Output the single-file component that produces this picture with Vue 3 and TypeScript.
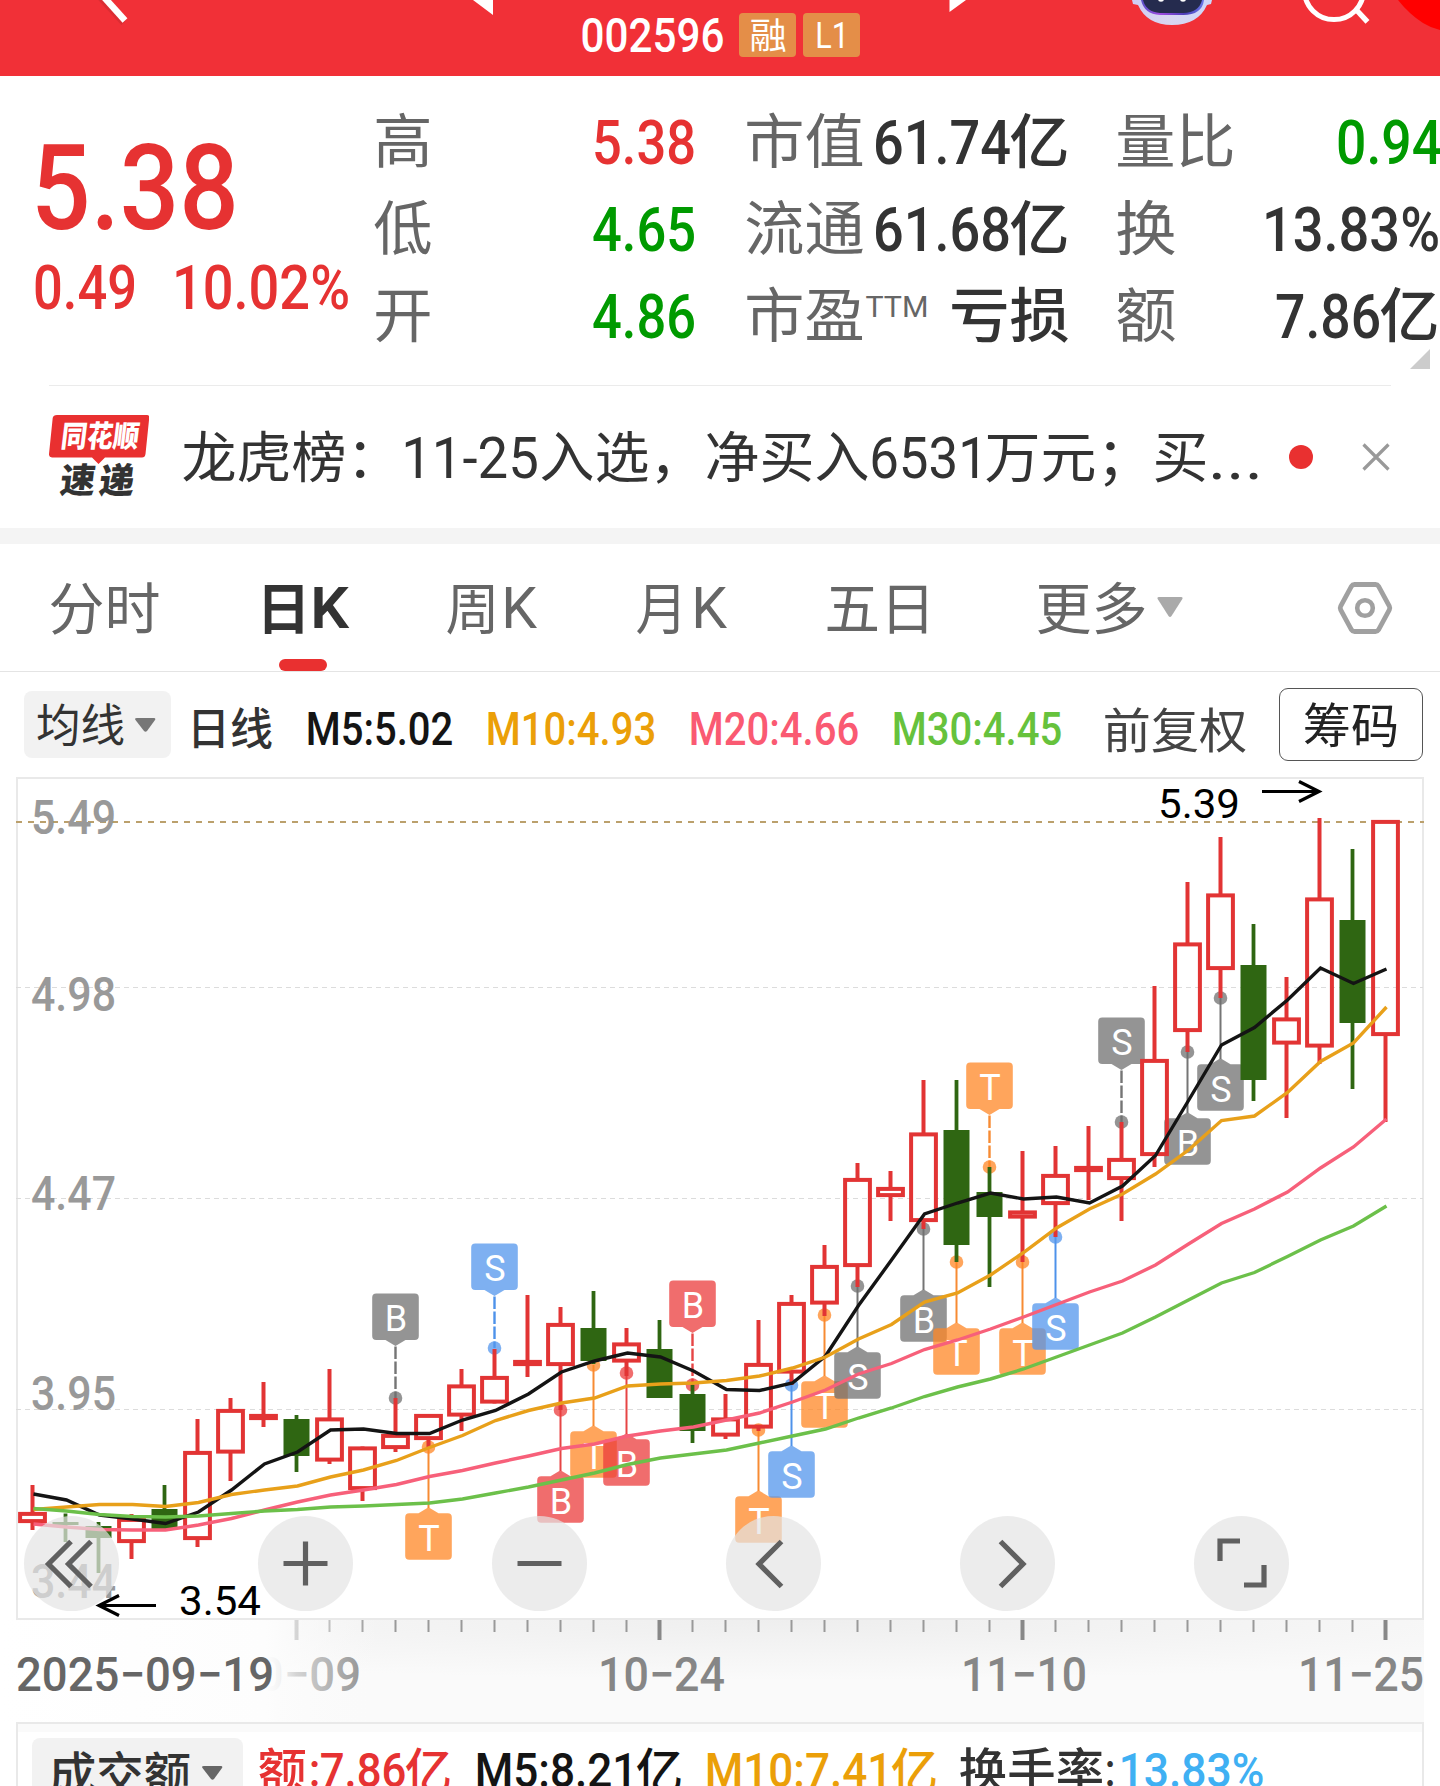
<script setup lang="ts">
import { h } from 'vue'

type Kind = 'num' | 'cjk'

interface FitProps {
  t: string
  w: number
  s: number
  b?: number
  k?: Kind
  h?: number
}

const CAP = 0.711

// One line of text condensed or widened to an exact ink width.
const Fit = (p: FitProps) => {
  const cjk = p.k === 'cjk'
  const height = p.h ?? p.s
  const pad = p.s * (cjk ? 0.045 : 0.05)
  return h('svg', { width: p.w, height, style: 'display:block;flex:none;overflow:visible' }, [
    h(
      'text',
      {
        x: -pad,
        y: height / 2 + p.s * (cjk ? 0.38 : CAP / 2),
        textLength: p.w + pad * 2,
        lengthAdjust: 'spacingAndGlyphs',
        'font-size': p.s,
        'font-weight': p.b ?? 400,
        'font-family': cjk ? '"Noto Sans CJK SC", sans-serif' : 'Roboto, "Noto Sans CJK SC", sans-serif',
        fill: 'currentColor',
      },
      p.t,
    ),
  ])
}
Fit.props = ['t', 'w', 's', 'b', 'k', 'h']

interface Part { t: string; w: number; k?: Kind }
interface Stat { label: string; lw: number; sup?: string; tone: string; parts: Part[] }

const stats: Stat[][] = [
  [
    { label: '高', lw: 54, tone: 'up', parts: [{ t: '5.38', w: 98 }] },
    { label: '低', lw: 54, tone: 'down', parts: [{ t: '4.65', w: 98 }] },
    { label: '开', lw: 54, tone: 'down', parts: [{ t: '4.86', w: 98 }] },
  ],
  [
    { label: '市值', lw: 115, tone: 'ink', parts: [{ t: '61.74', w: 132 }, { t: '亿', w: 55, k: 'cjk' }] },
    { label: '流通', lw: 115, tone: 'ink', parts: [{ t: '61.68', w: 132 }, { t: '亿', w: 55, k: 'cjk' }] },
    { label: '市盈', lw: 115, sup: 'TTM', tone: 'ink', parts: [{ t: '亏损', w: 115, k: 'cjk' }] },
  ],
  [
    { label: '量比', lw: 115, tone: 'down', parts: [{ t: '0.94', w: 100 }] },
    { label: '换', lw: 56, tone: 'ink', parts: [{ t: '13.83%', w: 172 }] },
    { label: '额', lw: 56, tone: 'ink', parts: [{ t: '7.86', w: 100 }, { t: '亿', w: 55, k: 'cjk' }] },
  ],
]

const mas = [
  { t: 'M5:5.02', w: 143, c: '#141414' },
  { t: 'M10:4.93', w: 166, c: '#eb9f08' },
  { t: 'M20:4.66', w: 166, c: '#fa5a72' },
  { t: 'M30:4.45', w: 166, c: '#66c23c' },
]

const cx = (i: number) => 32.5 + 33 * i

// kind (r: hollow red, g: filled green), body top, body bottom, high, low
type Candle = ['r' | 'g', number, number, number, number]
const candles: Candle[] = [
  ['r', 1512, 1523, 1485, 1530], ['g', 1522, 1525, 1513.5, 1542], ['g', 1526, 1538, 1522, 1573],
  ['r', 1518, 1543, 1514, 1559], ['g', 1509, 1529, 1485, 1529], ['r', 1451, 1540, 1419, 1547],
  ['r', 1409, 1453.5, 1398, 1481], ['r', 1414, 1420, 1382, 1427], ['g', 1419, 1456, 1415, 1472],
  ['r', 1417.5, 1461.5, 1369, 1464], ['r', 1446.5, 1490, 1446.5, 1501], ['r', 1434, 1449, 1398, 1452],
  ['r', 1414, 1440, 1414, 1448], ['r', 1384.5, 1416.5, 1369, 1431], ['r', 1376, 1403.5, 1349, 1403.5],
  ['r', 1360, 1366, 1295, 1377], ['r', 1323, 1366, 1307, 1410], ['g', 1328, 1361, 1291, 1364],
  ['r', 1342.5, 1362.5, 1328, 1376], ['g', 1349, 1398, 1320, 1398], ['g', 1394, 1431, 1385, 1443],
  ['r', 1417.5, 1436.5, 1394, 1439], ['r', 1363, 1428.5, 1320, 1431], ['r', 1302, 1373.5, 1295, 1385],
  ['r', 1265, 1304.5, 1245, 1316], ['r', 1178, 1267, 1163, 1287], ['r', 1187, 1197, 1171, 1221],
  ['r', 1132.5, 1222, 1080, 1229], ['g', 1130, 1245, 1080, 1262], ['g', 1192, 1217, 1167, 1287],
  ['r', 1210.5, 1218.5, 1151, 1262], ['r', 1174, 1205, 1146, 1237], ['r', 1166, 1172, 1126, 1200],
  ['r', 1158, 1180, 1122, 1221], ['r', 1059, 1156, 986, 1167], ['r', 942.5, 1032, 882, 1052],
  ['r', 893.5, 970, 837, 998], ['g', 965, 1080, 924, 1101], ['r', 1017.5, 1044.5, 977, 1118],
  ['r', 897.5, 1047.5, 818, 1064], ['g', 920, 1023, 849, 1089], ['r', 820, 1036, 820, 1122],
]

const lines = [
  { c: '#f7607a', y: [1524, 1527, 1529.5, 1530, 1530, 1525, 1518.5, 1510, 1502, 1495, 1490, 1484.5, 1476.5, 1470.5, 1463, 1456, 1448.5, 1444, 1436, 1431, 1427, 1420, 1413, 1402, 1390, 1374, 1363.5, 1349.5, 1340, 1329, 1317, 1304.5, 1292, 1281, 1265, 1244, 1223.5, 1209, 1192, 1168, 1147, 1119] },
  { c: '#141414', y: [1494, 1500, 1515, 1519, 1523.5, 1512, 1490, 1464, 1452, 1430, 1429, 1433.5, 1433.5, 1420, 1410.5, 1394, 1372, 1361, 1353, 1357, 1371, 1389.5, 1390.5, 1383, 1356, 1305.5, 1260, 1214, 1203, 1193, 1199, 1197, 1203, 1186, 1155.5, 1100.5, 1045, 1027.5, 1000, 968, 983.5, 969] },
  { c: '#e8a01a', y: [1509.5, 1507, 1504.5, 1504.5, 1506.5, 1502.5, 1494.5, 1490, 1486, 1477, 1470, 1460.5, 1447.5, 1435.5, 1420.5, 1410.5, 1403, 1398, 1386, 1384, 1383, 1380.5, 1376, 1368, 1357, 1339, 1324.5, 1302, 1293, 1275, 1252.5, 1228, 1209, 1194, 1174, 1150, 1120.5, 1116, 1092.5, 1061.5, 1043, 1007] },
  { c: '#6cc04a', y: [1508.5, 1511, 1514.5, 1516.5, 1517, 1516, 1513.5, 1511, 1509.5, 1507, 1506, 1504.5, 1503, 1499, 1493, 1487, 1480, 1473, 1464.5, 1458, 1454, 1450, 1443, 1436, 1429, 1418, 1408, 1396.5, 1387, 1379, 1369, 1357, 1345, 1333, 1317, 1300, 1283, 1272.5, 1256.5, 1240, 1226, 1206] },
]
const points = (ys: number[]) => ys.map((y, i) => `${cx(i) + 1},${y}`).join(' ')

const tones: Record<string, [string, string]> = {
  gray: ['#707070', '#757575'],
  blue: ['#5395ec', '#4e92ea'],
  red: ['#eb3c3c', '#e64545'],
  orange: ['#ff8725', '#f78b33'],
}
interface Marker { i: number; t: string; c: string; y: number; up?: boolean }
const markers: Marker[] = [
  { i: 11, t: 'B', c: 'gray', y: 1398, up: true }, { i: 12, t: 'T', c: 'orange', y: 1447 },
  { i: 14, t: 'S', c: 'blue', y: 1348, up: true }, { i: 16, t: 'B', c: 'red', y: 1410 },
  { i: 17, t: 'T', c: 'orange', y: 1365 }, { i: 18, t: 'B', c: 'red', y: 1373 },
  { i: 20, t: 'B', c: 'red', y: 1385, up: true }, { i: 22, t: 'T', c: 'orange', y: 1430 },
  { i: 23, t: 'S', c: 'blue', y: 1385 }, { i: 24, t: 'T', c: 'orange', y: 1315 },
  { i: 25, t: 'S', c: 'gray', y: 1286 }, { i: 27, t: 'B', c: 'gray', y: 1229 },
  { i: 28, t: 'T', c: 'orange', y: 1262 }, { i: 29, t: 'T', c: 'orange', y: 1167, up: true },
  { i: 30, t: 'T', c: 'orange', y: 1262 }, { i: 31, t: 'S', c: 'blue', y: 1237 },
  { i: 33, t: 'S', c: 'gray', y: 1122, up: true }, { i: 35, t: 'B', c: 'gray', y: 1052 },
  { i: 36, t: 'S', c: 'gray', y: 998 },
]
const boxTop = (m: Marker) => (m.up ? m.y - 104.5 : m.y + 66.3)
const badge = (m: Marker) => {
  const x = cx(m.i)
  const t = boxTop(m)
  const l = x - 23.3
  const r = x + 23.3
  const b = t + 46.5
  const tip = m.up
    ? `M${x - 10} ${b}L${x} ${b + 6}L${x + 10} ${b}Z`
    : `M${x - 10} ${t}L${x} ${t - 6}L${x + 10} ${t}Z`
  return `M${l + 4} ${t}H${r - 4}Q${r} ${t} ${r} ${t + 4}V${b - 4}Q${r} ${b} ${r - 4} ${b}H${l + 4}Q${l} ${b} ${l} ${b - 4}V${t + 4}Q${l} ${t} ${l + 4} ${t}Z${tip}`
}

const axis = [
  { t: '5.49', y: 834 }, { t: '4.98', y: 1011 }, { t: '4.47', y: 1209.5 }, { t: '3.95', y: 1410 }, { t: '3.44', y: 1598 },
]
const ticks = Array.from({ length: 34 }, (_, n) => n + 8)
const isMajor = (i: number) => (i - 8) % 11 === 0

const tools = [
  'M47 25.5L24.5 48L47 70.5M67 25.5L44.5 48L67 70.5',
  'M25.5 47.5H69.5M47.5 25.5V69.5',
  'M25.5 47.5H69.5',
  'M55.5 25.5L33 48L55.5 70.5',
  'M40.5 25.5L63 48L40.5 70.5',
  'M46 25H26V45M70 49V69H50',
]
</script>

<template>
  <div class="page">
    <header class="top">
      <svg class="top-art" width="1440" height="76" viewBox="0 0 1440 76">
        <defs>
          <linearGradient id="face" x1="0" y1="0" x2="1" y2="0">
            <stop offset="0" stop-color="#cfcdf5" /><stop offset=".45" stop-color="#d9d5ef" /><stop offset="1" stop-color="#cdd8fb" />
          </linearGradient>
          <linearGradient id="visor" x1="0" y1="0" x2="1" y2="0">
            <stop offset="0" stop-color="#5a50c8" /><stop offset=".3" stop-color="#a04be0" /><stop offset=".7" stop-color="#4a3cb8" /><stop offset="1" stop-color="#6a78e8" />
          </linearGradient>
        </defs>
        <path d="M95 -8L123.500 23" stroke="#c22a30" stroke-width="6" opacity=".45" />
        <path d="M97.500 -10L125 20.500" stroke="#fff" stroke-width="6.500" />
        <path d="M473 0H493V15Z M949.500 0H966L949.500 12Z" fill="#fff" />
        <path d="M1132 0H1212L1211 4L1207 5Q1198 25 1172 25Q1147 25 1138 5L1133 4Z" fill="url(#face)" />
        <path d="M1141 0H1204Q1202 15 1183 15H1160Q1144 14 1141 0Z" fill="url(#visor)" />
        <path d="M1143 0H1202Q1199 12.500 1183 13H1160Q1146 12 1143 0Z" fill="#252b4e" />
        <ellipse cx="1161" cy="0" rx="2.800" ry="1.800" fill="#fff" />
        <ellipse cx="1183" cy="0" rx="2.800" ry="1.800" fill="#fff" />
        <circle cx="1334" cy="-10" r="29.600" fill="none" stroke="#fff" stroke-width="5" />
        <path d="M1356 9.500L1367.500 21.800" stroke="#fff" stroke-width="5.400" />
        <path d="M1398 0Q1409 14 1423 23Q1431 28 1440 30V0Z" fill="#f00" />
      </svg>
      <div class="code">
        <Fit t="002596" :w="139" :s="48" :b="500" :h="45" />
        <span class="tag"><Fit t="融" :w="34" :s="36" k="cjk" :h="44" /></span>
        <span class="tag second"><Fit t="L1" :w="30" :s="37" :h="44" /></span>
      </div>
    </header>

    <section class="quote">
      <div class="price up">
        <Fit t="5.38" :w="196" :s="119" :b="500" :h="100" />
        <div class="change">
          <Fit t="0.49" :w="98" :s="60.500" :b="500" :h="61" />
          <Fit t="10.02%" :w="172" :s="60.500" :b="500" :h="61" />
        </div>
      </div>
      <div v-for="(col, c) in stats" :key="c" class="col">
        <div v-for="s in col" :key="s.label" class="stat">
          <div class="label">
            <Fit :t="s.label" :w="s.lw" :s="59" k="cjk" :h="86" />
            <Fit v-if="s.sup" class="sup" :t="s.sup" :w="60" :s="30" :h="68" />
          </div>
          <div class="value" :class="s.tone">
            <Fit v-for="p in s.parts" :key="p.t" :t="p.t" :w="p.w" :k="p.k" :s="p.k ? 59 : 60.500" :b="500" :h="p.k ? 86 : 89" />
          </div>
        </div>
      </div>
      <i class="corner"></i>
    </section>

    <section class="news">
      <svg class="logo" width="100" height="84" viewBox="49 415 100 84">
        <path d="M57 415H147Q149.500 415 149.200 418L145.500 454Q145 457.500 142 457.500H105L98.500 464L92 457.500H52Q48.700 457.500 49 454L52.700 418Q53.200 415 57 415Z" fill="#e93030" />
        <g transform="skewX(-7)" font-family="'Noto Sans CJK SC', sans-serif" font-weight="900">
          <text x="115" y="447" font-size="30" textLength="78" lengthAdjust="spacingAndGlyphs" fill="#fff">同花顺</text>
          <text x="119.500" y="493.500" font-size="35" textLength="74" lengthAdjust="spacing" fill="#333">速递</text>
        </g>
      </svg>
      <div class="headline">
        <Fit t="龙虎榜：" :w="215" :s="55" k="cjk" :h="82" />
        <Fit class="n1" t="11-25" :w="132" :s="57" :h="85" />
        <Fit class="n2" t="入选，净买入" :w="325" :s="55" k="cjk" :h="82" />
        <Fit class="n3" t="6531" :w="113" :s="57" :h="85" />
        <Fit class="n4" t="万元；买" :w="219" :s="55" k="cjk" :h="82" />
        <Fit class="n5" t="..." :w="49" :s="61" :h="84" />
      </div>
      <i class="dot"></i>
      <svg class="close" width="28" height="28" viewBox="0 0 28 28"><path d="M1.500 1.500L26.500 26.500M26.500 1.500L1.500 26.500" stroke="#999" stroke-width="3.200" /></svg>
    </section>

    <div class="band"></div>

    <nav class="tabs">
      <Fit t="分时" :w="107" :s="55.500" k="cjk" :h="127" />
      <div class="on ink">
        <Fit t="日" :w="49" :s="56" k="cjk" :b="600" :h="127" />
        <Fit t="K" :w="33" :s="57.500" :b="600" :h="128" />
        <i class="bar"></i>
      </div>
      <div class="pair zhou"><Fit t="周" :w="49" :s="56" k="cjk" :h="127" /><Fit t="K" :w="30" :s="57.500" :h="128" /></div>
      <div class="pair yue"><Fit t="月" :w="47" :s="56" k="cjk" :h="127" /><Fit t="K" :w="30" :s="57.500" :h="128" /></div>
      <Fit class="wu" t="五日" :w="106" :s="56" k="cjk" :h="127" />
      <Fit class="more" t="更多" :w="107" :s="56" k="cjk" :h="127" />
      <svg class="tri" width="26" height="21"><path d="M2 0H24Q26.500 0 25 2.500L14.500 19Q13 21 11.500 19L1 2.500Q-.5 0 2 0Z" fill="#aaa" /></svg>
      <svg class="hex" width="56" height="54" viewBox="0 0 56 54">
        <path d="M17.500 3.500H38.500Q40.500 3.500 41.500 5.200L52.300 25Q53.300 27 52.300 29L41.500 48.800Q40.500 50.500 38.500 50.500H17.500Q15.500 50.500 14.500 48.800L3.700 29Q2.700 27 3.700 25L14.500 5.200Q15.500 3.500 17.500 3.500Z" fill="none" stroke="#a0a0a0" stroke-width="4.800" />
        <circle cx="28" cy="27" r="7.800" fill="none" stroke="#a0a0a0" stroke-width="4.600" />
      </svg>
    </nav>

    <section class="ma">
      <div class="pick">
        <Fit t="均线" :w="85" :s="45" k="cjk" :h="69" />
        <svg width="21" height="14"><path d="M0 1Q0 0 2 0H19Q21 0 20 2L12 13Q10.500 14.500 9 13L.5 2Z" fill="#777" /></svg>
      </div>
      <Fit class="ink day" t="日线" :w="82" :s="44" :b="500" k="cjk" :h="72" />
      <div class="vals">
        <Fit v-for="m in mas" :key="m.t" :t="m.t" :w="m.w" :s="45.500" :b="500" :h="77" :style="{ color: m.c }" />
      </div>
      <Fit class="fq" t="前复权" :w="140" :s="48" k="cjk" :h="76" />
      <div class="chip"><Fit t="筹码" :w="92" :s="48" k="cjk" :h="71" /></div>
    </section>

    <section class="chart">
      <svg width="1440" height="847" viewBox="0 775 1440 847">
        <rect x="17" y="778" width="1406" height="841" fill="#fff" stroke="#e9e9e9" stroke-width="2" />
        <path d="M16 987.500H1423M16 1198.500H1423M16 1409.500H1423" stroke="#dcdcdc" stroke-width="1.200" stroke-dasharray="5 4" />
        <path d="M16 822H1424" stroke="#bba06c" stroke-width="1.800" stroke-dasharray="6 6" />
        <g font-family="Roboto, sans-serif" font-weight="500" font-size="47.500" fill="#999">
          <text v-for="a in axis" :key="a.t" x="31" :y="a.y" textLength="85" lengthAdjust="spacingAndGlyphs">{{ a.t }}</text>
        </g>
        <g v-for="m in markers" :key="m.i">
          <path
            :d="m.up ? `M${cx(m.i)} ${boxTop(m) + 53}V${m.y}` : `M${cx(m.i)} ${m.y}V${m.y + 61}`"
            :stroke="tones[m.c][1]"
            :stroke-width="m.up ? 2.4 : 2"
            :stroke-dasharray="m.up ? '12.5 2.5' : undefined"
          />
          <circle :cx="cx(m.i)" :cy="m.y" r="6.800" :fill="tones[m.c][0]" opacity=".75" />
          <path :d="badge(m)" :fill="tones[m.c][0]" opacity=".75" />
          <text :x="cx(m.i) + 0.5" :y="boxTop(m) + 37.3" text-anchor="middle" font-family="Roboto, sans-serif" font-size="36" fill="#fff">{{ m.t }}</text>
        </g>
        <g v-for="(k, i) in candles" :key="'k' + i">
          <template v-if="k[0] === 'g'">
            <path :d="`M${cx(i)} ${k[3]}V${k[4]}`" stroke="#2f6612" stroke-width="3.800" />
            <rect :x="cx(i) - 13" :y="k[1]" width="26" :height="k[2] - k[1]" fill="#2f6612" />
          </template>
          <template v-else>
            <path :d="`M${cx(i)} ${k[3]}V${k[1] + 1}M${cx(i)} ${k[2] - 1}V${k[4]}`" stroke="#e23434" stroke-width="4" />
            <rect :x="cx(i) - 12.4" :y="k[1] + 1.9" width="24.800" :height="k[2] - k[1] - 3.8" fill="none" stroke="#e23434" stroke-width="4" />
          </template>
        </g>
        <polyline v-for="l in lines" :key="l.c" :points="points(l.y)" fill="none" :stroke="l.c" stroke-width="3.400" />
        <g fill="none" stroke="#000" stroke-width="3.200">
          <path d="M1262 791.500H1319M1299 781.500L1319 791.500L1299 801.500" />
          <path d="M156 1605.500H100M119 1595.500L99 1605.500L119 1615.500" />
        </g>
        <g font-family="Roboto, sans-serif" font-size="40.500" fill="#000">
          <text x="1158" y="818" textLength="82" lengthAdjust="spacingAndGlyphs">5.39</text>
          <text x="179" y="1615" textLength="82" lengthAdjust="spacingAndGlyphs">3.54</text>
        </g>
      </svg>
      <div class="tools">
        <button v-for="d in tools" :key="d" class="tool">
          <svg width="95" height="95" viewBox="0 0 95 95"><path :d="d" fill="none" stroke="#606060" stroke-width="5.200" /></svg>
        </button>
      </div>
    </section>

    <section class="dates">
      <svg width="1440" height="102" viewBox="0 1620 1440 102">
        <defs>
          <linearGradient id="fade" x1="0" x2="1"><stop offset="0" stop-color="#fff" /><stop offset=".7" stop-color="#fdfdfd" /><stop offset=".735" stop-color="#fcfcfc" stop-opacity=".93" /><stop offset=".78" stop-color="#fcfcfc" stop-opacity=".66" /><stop offset="1" stop-color="#fafafa" stop-opacity="0" /></linearGradient>
        </defs>
        <path v-for="i in ticks" :key="i" :d="`M${cx(i)} 1620V${isMajor(i) ? 1640 : 1632}`" :stroke="isMajor(i) ? '#888' : '#999'" :stroke-width="isMajor(i) ? 4 : 2" />
        <g font-family="Roboto, sans-serif" font-weight="500" font-size="48" fill="#868686">
          <text x="232" y="1690.500" textLength="129" lengthAdjust="spacingAndGlyphs">10−09</text>
          <text x="598" y="1690.500" textLength="127" lengthAdjust="spacingAndGlyphs">10−24</text>
          <text x="961" y="1690.500" textLength="126" lengthAdjust="spacingAndGlyphs">11−10</text>
          <text x="1298" y="1690.500" textLength="126" lengthAdjust="spacingAndGlyphs">11−25</text>
          <rect x="0" y="1620" width="380" height="102" fill="url(#fade)" />
          <text x="16" y="1690.500" textLength="258" lengthAdjust="spacingAndGlyphs" fill="#666">2025−09−19</text>
        </g>
      </svg>
    </section>

    <section class="volume">
      <div class="pick vol">
        <Fit class="ink" t="成交额" :w="138" :s="48" :b="500" k="cjk" :h="69" />
        <svg width="21" height="14"><path d="M0 1Q0 0 2 0H19Q21 0 20 2L12 13Q10.500 14.500 9 13L.5 2Z" fill="#666" /></svg>
      </div>
      <div class="grp up v1"><Fit t="额" :w="45" :s="48" :b="500" k="cjk" /><Fit t=":" :w="7" :s="47" :b="500" /><Fit t="7.86" :w="82" :s="47.500" :b="500" /><Fit t="亿" :w="43" :s="48" :b="500" k="cjk" /></div>
      <div class="grp black v2"><Fit t="M5:8.21" :w="158" :s="47.500" :b="500" /><Fit t="亿" :w="43" :s="48" :b="500" k="cjk" /></div>
      <div class="grp gold v3"><Fit t="M10:7.41" :w="183" :s="47.500" :b="500" /><Fit t="亿" :w="43" :s="48" :b="500" k="cjk" /></div>
      <div class="grp ink v4"><Fit t="换手率" :w="141" :s="48" :b="500" k="cjk" /><Fit t=":" :w="6" :s="47" :b="500" /></div>
      <Fit class="sky v5" t="13.83%" :w="141" :s="47.500" :b="500" />
    </section>
  </div>
</template>

<style>
body { margin: 0; background: #fff; }
</style>

<style scoped>
.page { width: 1440px; height: 1786px; overflow: hidden; background: #fff; color: #666; font-family: Roboto, "Noto Sans CJK SC", sans-serif; }
.page svg { display: block; flex: none; }
.up { color: #e63232; }
.down { color: #009a00; }
.ink { color: #333; }
.black { color: #141414; }
.gold { color: #eb9f08; }
.sky { color: #3fb0f3; }

.top { position: relative; height: 76px; background: #f13037; }
.top-art { position: absolute; inset: 0; }
.code { position: relative; display: flex; align-items: center; padding: 12px 0 0 583px; color: #fff; }
.tag { display: flex; justify-content: center; width: 57px; height: 44px; margin-left: 17px; border-radius: 4px; background: #e48e48; }
.tag.second { margin-left: 7px; }

.quote { position: relative; display: flex; box-sizing: border-box; height: 309px; padding-left: 37px; }
.price { width: 339px; padding-top: 61px; }
.change { display: flex; gap: 41px; margin: 20px 0 0 -1px; }
.col { box-sizing: border-box; width: 319px; margin-right: 52px; padding: 22px 2px 0 0; }
.col + .col { width: 320px; margin-right: 51px; padding-right: 0; }
.col + .col + .col { width: 321px; margin-right: 0; }
.col:last-of-type .stat { padding-right: 2px; }
.col:last-of-type .stat:first-child { padding-right: 0; }
.stat { display: flex; justify-content: space-between; height: 87px; }
.label, .value { display: flex; }
.label { gap: 5px; }
.value { gap: 4px; }
.corner { position: absolute; right: 10px; bottom: 16px; border-left: 20px solid transparent; border-bottom: 20px solid #ccc; }

.news { display: flex; align-items: center; height: 142px; margin: 0 49px; border-top: 1px solid #ebebeb; }
.headline { display: flex; width: 1078px; margin-left: 35px; color: #333; }
.n1 { margin-left: 5px; }
.n2 { margin-left: 6px; }
.n3 { margin-left: 5px; }
.n4 { margin-left: 2px; }
.n5 { margin-left: 5px; }
.dot { width: 24px; height: 24px; margin-left: 27px; border-radius: 50%; background: #e93030; }
.close { margin-left: 49px; }
.band { height: 16px; background: #f4f4f4; }

.tabs { display: flex; height: 127px; padding-left: 51px; border-bottom: 1px solid #e4e4e4; }
.on { position: relative; display: flex; gap: 5px; margin-left: 101px; }
.bar { position: absolute; left: 20px; bottom: 0; width: 48px; height: 12px; border-radius: 6px; background: #e93030; }
.pair { display: flex; gap: 7px; }
.zhou { margin-left: 102px; }
.yue { gap: 9px; margin-left: 104px; }
.wu { margin-left: 103px; }
.more { margin-left: 105px; }
.tri { margin: 53px 0 0 12px; }
.hex { margin: 37px 0 0 154px; }

.ma { display: flex; height: 103px; padding: 0 16px 0 24px; }
.pick { display: flex; align-items: center; box-sizing: border-box; width: 147px; height: 67px; margin: 19px 18px 0 0; padding-left: 14px; gap: 12px; border-radius: 8px; background: #f2f2f2; color: #333; }
.ma > svg { margin-top: 20px; }
.vals { display: flex; gap: 37px; margin: 18px 0 0 37px; }
.fq { margin-left: 45px; color: #444; }
.chip { display: flex; justify-content: center; box-sizing: border-box; width: 144px; height: 73px; margin: 16px 0 0 34px; border: 1px solid #555; border-radius: 9px; color: #222; }

.chart { position: relative; height: 845px; }
.tools { position: absolute; left: 24px; top: 741px; display: flex; gap: 139px; }
.tool { width: 95px; height: 95px; padding: 0; border: 0; border-radius: 50%; background: rgba(228, 228, 228, .7); }

.dates { width: 1424px; height: 102px; overflow: hidden; background: radial-gradient(ellipse 900px 60px at 800px 0, #eee, #fafafa); }
.volume { display: flex; align-items: flex-start; box-sizing: border-box; height: 90px; margin: 0 16px; border: 2px solid #e9e9e9; border-bottom: 0; background: linear-gradient(#fafafa 8px, #fff 8px); }
.pick.vol { width: 211px; height: 70px; margin: 14px 0 0 14px; padding-left: 19px; gap: 13px; }
.grp { display: flex; }
.volume > .grp, .volume > svg { margin-top: 22px; }
.v1 { margin-left: 17px; gap: 3px; }
.v1 svg:nth-child(2) { margin: 0 1px 0 3px; }
.v2, .v3 { gap: 3px; }
.v2 { margin-left: 27px; }
.v3 { margin-left: 26px; }
.v4 { margin-left: 25px; gap: 5px; }
.volume > .v5 { margin-left: 8px; }
</style>
